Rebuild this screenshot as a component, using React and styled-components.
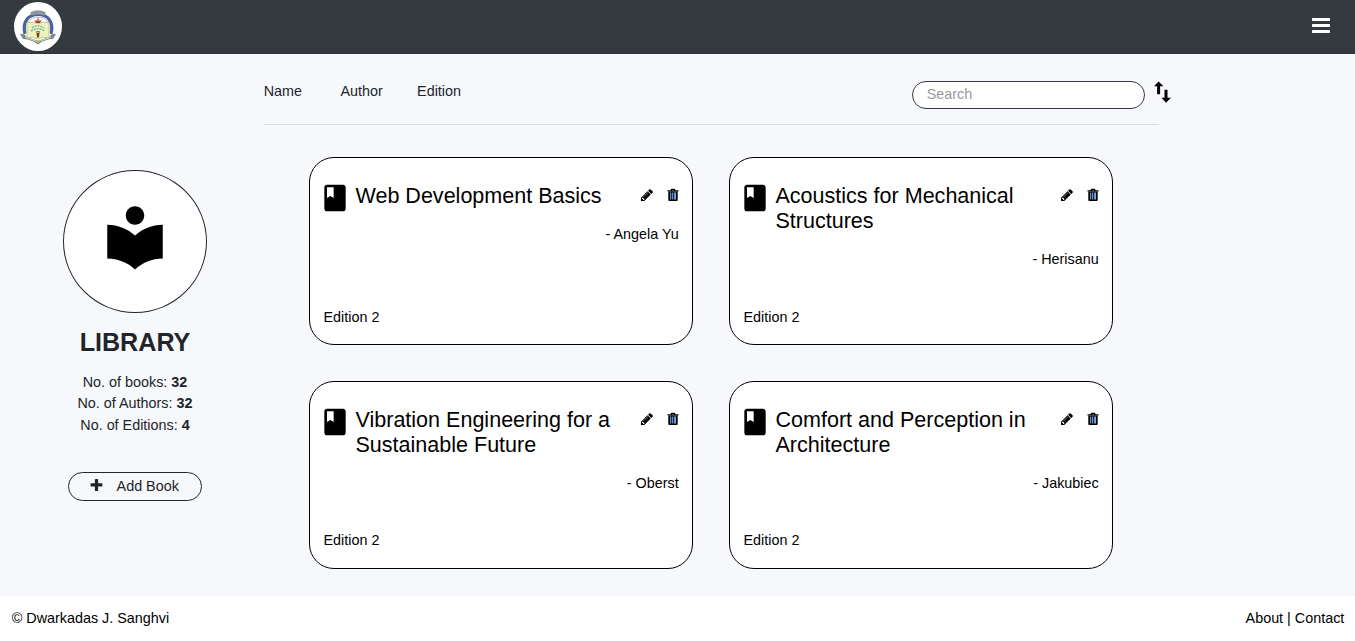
import React from 'react';
import styled, { createGlobalStyle } from 'styled-components';

const GlobalStyle = createGlobalStyle`
  *, *::before, *::after { box-sizing: border-box; }
  html { font-size: 14.36px; }
  body {
    margin: 0;
    background: #f7f8fc;
    color: #212529;
    font-family: "Liberation Sans", Arial, sans-serif;
    font-size: 1rem;
    line-height: 1.5;
    overflow: hidden;
  }
  svg { display: block; flex: none; }
`;

const Page = styled.div`
  height: 641px;
  display: flex;
  flex-direction: column;
`;

const Navbar = styled.header`
  height: 54px;
  flex: none;
  padding: 0 25px 0 14px;
  display: flex;
  align-items: center;
  justify-content: space-between;
  background: #343a40;
  border-bottom: 1px solid #2f353b;
`;

const LogoBadge = styled.div`
  width: 48px;
  height: 49px;
  border-radius: 50%;
  background: #fff;
  display: grid;
  place-items: center;
`;

const MenuButton = styled.button`
  border: 0;
  padding: 0;
  background: none;
  display: flex;
  margin-top: -2px;
`;

const Body = styled.div`
  flex: 1;
  display: flex;
  min-height: 0;
`;

const Sidebar = styled.aside`
  width: 263.7px;
  flex: none;
  padding: 116px 0 0 6.3px;
  display: flex;
  flex-direction: column;
  align-items: center;
`;

const Avatar = styled.div`
  width: 144px;
  height: 143px;
  border: 1px solid #212529;
  border-radius: 50%;
  background: #fff;
  display: flex;
  justify-content: center;
  padding: 29.2px 0.8px 0 0;
`;

const SidebarTitle = styled.h3`
  margin: 14px 0 14.8px;
  font-size: 1.75rem;
  line-height: 30px;
  font-weight: 700;
`;

const Stat = styled.div`
  line-height: 21.5px;
`;

const AddButton = styled.button`
  margin-top: 35.7px;
  width: 134px;
  height: 29px;
  padding: 0 0 1px 21px;
  display: flex;
  align-items: center;
  gap: 13.6px;
  border: 1px solid #212529;
  border-radius: 15px;
  background: transparent;
  color: #212529;
  font: inherit;
  line-height: 28px;
`;

const Main = styled.main`
  width: 907px;
  flex: none;
`;

const Toolbar = styled.div`
  height: 70px;
  width: 907.8px;
  display: flex;
  align-items: flex-start;
  padding-top: 27px;
`;

const SortTabs = styled.nav`
  display: flex;
  flex: 1;
  line-height: 21px;
`;

const SortTab = styled.span`
  width: 76.7px;
`;

const SearchInput = styled.input`
  width: 233px;
  height: 28px;
  margin-right: 9.8px;
  padding: 0 14px 2px;
  border: 1px solid #343a40;
  border-radius: 14px;
  background: #fff;
  font: inherit;
  &::placeholder { color: #999; opacity: 1; }
`;

const Divider = styled.hr`
  width: 895px;
  margin: 0;
  border: 0;
  border-top: 1px solid #dcdde1;
`;

const CardGrid = styled.div`
  display: grid;
  grid-template-columns: 384px 384px;
  grid-auto-rows: 187.8px;
  gap: 36px;
  padding: 32px 0 0 45.3px;
`;

const Card = styled.article`
  display: flex;
  flex-direction: column;
  padding: 24px 13.3px 16.2px 13.5px;
  border: 1px solid #000;
  border-radius: 25px;
  background: #fff;
  color: #000;
`;

const CardHead = styled.div`
  display: flex;
  align-items: flex-start;
`;

const BookMark = styled.div`
  width: 32px;
  margin: 0.3px 4.8px -8px -4.8px;
`;

const BookTitle = styled.h4`
  flex: 1;
  margin: 2px 0 0;
  font-size: 1.5rem;
  font-weight: 400;
  line-height: 25px;
`;

const Actions = styled.div`
  display: flex;
  gap: 12.7px;
  padding-top: 6px;
  margin-left: 20px;
`;

const Author = styled.div`
  margin-top: 14px;
  text-align: right;
  line-height: 22px;
`;

const Edition = styled.div`
  margin-top: auto;
  line-height: 22px;
`;

const Footer = styled.footer`
  height: 45px;
  flex: none;
  padding: 0 10.7px 0 11.7px;
  display: flex;
  align-items: center;
  justify-content: space-between;
  background: #fff;
  color: #000;
`;

const CollegeLogo = () => (
  <svg width="38" height="38" viewBox="0 0 38 38">
    <path d="M6 26C3 14 9 6.5 19 6.5S35 14 32 26" fill="#fff" stroke="#4a62a3" strokeWidth="3.2" />
    <path d="M8.5 24C7 14 11 9.2 19 9.2s12 4.8 10.5 14.8" fill="none" stroke="#b4bfd6" strokeWidth="1" />
    <path d="M11 4.5q8-4.5 16 0l-2 3q-6-2-12 0z" fill="#8d969c" />
    <path d="M1 26q4-1 7 3l11 4 11-4q3-4 7-3l-3 5q-8 0-15 5.5-7-5.5-15-5.5z" fill="#7d888d" />
    <path d="M6 29l13 5 13-5" fill="none" stroke="#d0d5d3" strokeWidth="1" />
    <path d="M8 14.5q6-1 11 1 5-2 11-1v15q-6-1-11 1.5-5-2.5-11-1.5z" fill="#eef2c0" stroke="#c3cb83" strokeWidth="1" />
    <path d="M13 20q6-4.5 12 0M12 23q7-4.5 14 0" fill="none" stroke="#72b89a" strokeWidth="1.5" strokeDasharray="2 1" />
    <path d="M15.5 12.5h7l-1.5 2.5h-4z" fill="#a84437" />
    <path d="M19 8.5l1.5 4h-3z" fill="#d69067" />
    <path d="M17.3 23h3.4l-.7 6.5h-2z" fill="#704332" />
    <path d="M18 23.5h2v1.5h-2z" fill="#e0b353" />
    <path d="M16.5 33.5l2.5-1.5 2.5 1.5-2.5 1.5z" fill="#a7c64f" />
  </svg>
);

const MenuIcon = () => (
  <svg width="18" height="15" viewBox="0 0 18 15" fill="#fff">
    <rect width="18" height="3" rx=".4" />
    <rect y="6" width="18" height="3" rx=".4" />
    <rect y="12" width="18" height="3" rx=".4" />
  </svg>
);

const ReaderIcon = () => (
  <svg width="74" height="74" viewBox="0 0 24 24">
    <path d="M12 11.55C9.64 9.35 6.48 8 3 8v11c3.48 0 6.64 1.35 9 3.55 2.36-2.19 5.52-3.55 9-3.55V8c-3.48 0-6.64 1.35-9 3.55zM12 8c1.66 0 3-1.34 3-3s-1.34-3-3-3-3 1.34-3 3 1.34 3 3 3z" />
  </svg>
);

const PlusIcon = () => (
  <svg width="13" height="13" viewBox="128 128 1536 1536" fill="#212529">
    <path d="M1600 736v192q0 40-28 68t-68 28h-416v416q0 40-28 68t-68 28h-192q-40 0-68-28t-28-68v-416h-416q-40 0-68-28t-28-68v-192q0-40 28-68t68-28h416v-416q0-40 28-68t68-28h192q40 0 68 28t28 68v416h416q40 0 68 28t28 68z" />
  </svg>
);

const SwapIcon = () => (
  <svg width="17" height="22" viewBox="0 0 17 22">
    <path d="M4.6.4L9.4 5.2H6.1V13.3H3.1V5.2H0zM10.5 8.7h3v8h3.5L12 21.7 7.5 16.7h3z" />
  </svg>
);

const BookIcon = () => (
  <svg width="32" height="32" viewBox="0 0 24 24">
    <path d="M18 2H6c-1.1 0-2 .9-2 2v16c0 1.1.9 2 2 2h12c1.1 0 2-.9 2-2V4c0-1.1-.9-2-2-2zM6 4h5v8l-2.5-1.5L6 12V4z" />
  </svg>
);

const PencilIcon = () => (
  <svg width="14" height="14" viewBox="0 0 1792 1792">
    <path d="M491 1536l91-91-235-235-91 91v107h128v128h107zm523-928q0-22-22-22-10 0-17 7l-542 542q-7 7-7 17 0 22 22 22 10 0 17-7l542-542q7-7 7-17zm-54-192l416 416-832 832h-416v-416zm683 96q0 53-37 90l-166 166-416-416 166-165q36-38 90-38 53 0 91 38l235 234q37 39 37 91z" />
  </svg>
);

const TrashIcon = () => (
  <svg width="12" height="14" viewBox="0 0 12 14">
    <path d="M1.3 3.5h9.4V12q0 1-1 1h-7.4q-1 0-1-1z" />
    <path d="M.5 2.9h11M4 2.5l.6-1.2h2.8L8 2.5" fill="none" stroke="#000" strokeWidth="1.2" />
    <path d="M3 4.5h1v7H3zM5 4.5h1v7H5zM7 4.5h1v7H7z" fill="#4f93e6" />
    <path d="M4 4.5h1v7H4zM6 4.5h1v7H6z" fill="#33251f" />
    <path d="M8 4.5h1v7H8z" fill="#8fa4c0" />
  </svg>
);

const BOOKS = [
  { title: 'Web Development Basics', author: 'Angela Yu', edition: 2 },
  { title: 'Acoustics for Mechanical Structures', author: 'Herisanu', edition: 2 },
  { title: 'Vibration Engineering for a Sustainable Future', author: 'Oberst', edition: 2 },
  { title: 'Comfort and Perception in Architecture', author: 'Jakubiec', edition: 2 },
];

const BookCard = ({ title, author, edition }) => (
  <Card>
    <CardHead>
      <BookMark><BookIcon /></BookMark>
      <BookTitle>{title}</BookTitle>
      <Actions><PencilIcon /><TrashIcon /></Actions>
    </CardHead>
    <Author>- {author}</Author>
    <Edition>Edition {edition}</Edition>
  </Card>
);

export default function App() {
  return (
    <Page>
      <GlobalStyle />
      <Navbar>
        <LogoBadge><CollegeLogo /></LogoBadge>
        <MenuButton aria-label="Menu"><MenuIcon /></MenuButton>
      </Navbar>
      <Body>
        <Sidebar>
          <Avatar><ReaderIcon /></Avatar>
          <SidebarTitle>LIBRARY</SidebarTitle>
          <Stat>No. of books: <b>32</b></Stat>
          <Stat>No. of Authors: <b>32</b></Stat>
          <Stat>No. of Editions: <b>4</b></Stat>
          <AddButton><PlusIcon />Add Book</AddButton>
        </Sidebar>
        <Main>
          <Toolbar>
            <SortTabs>
              <SortTab>Name</SortTab>
              <SortTab>Author</SortTab>
              <SortTab>Edition</SortTab>
            </SortTabs>
            <SearchInput placeholder="Search" />
            <SwapIcon />
          </Toolbar>
          <Divider />
          <CardGrid>
            {BOOKS.map((book) => <BookCard key={book.title} {...book} />)}
          </CardGrid>
        </Main>
      </Body>
      <Footer>
        <span>© Dwarkadas J. Sanghvi</span>
        <span>About | Contact</span>
      </Footer>
    </Page>
  );
}
